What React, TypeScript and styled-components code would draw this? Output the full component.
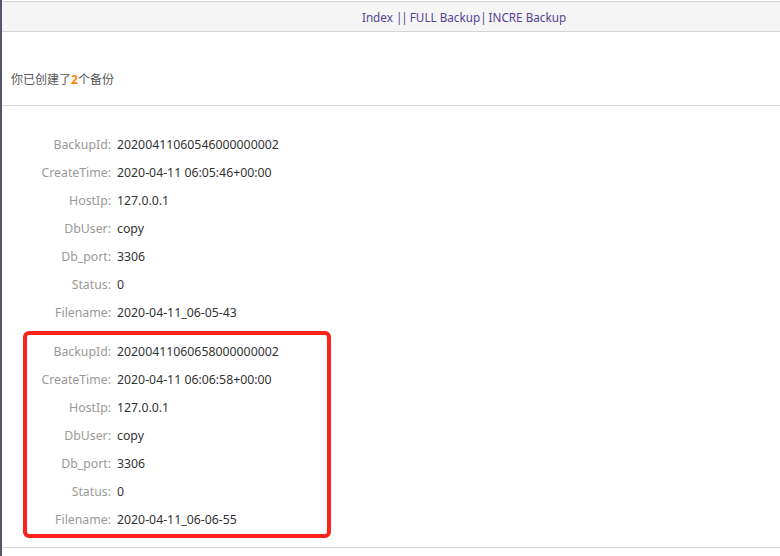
import React from "react";
import styled, { createGlobalStyle } from "styled-components";

const Global = createGlobalStyle`
  html, body { margin: 0; padding: 0; background: #fff; }
  body { font-family: "Noto Sans", "Noto Sans CJK SC", sans-serif; font-size: 12px; }
`;

const Page = styled.div`
  min-height: 556px;
  border-left: 2px solid #55556e;
  box-sizing: border-box;
  padding-top: 1px;
`;

const Header = styled.div`
  height: 29px;
  background: #f5f5f5;
  border-top: 1px solid #d6d6d6;
  border-bottom: 1px solid #d6d6d6;
  display: flex;
  align-items: center;
  justify-content: center;
  padding-left: 146px;
`;

const NavLink = styled.a`
  color: #573f93;
  text-decoration: none;
  font-size: 11.7px;
  white-space: pre;
`;

const Pipe = styled.span`
  letter-spacing: -1px;
`;

const Summary = styled.div`
  padding: 37px 9px 15px;
  line-height: 20px;
  color: #555;
  font-family: "Noto Sans CJK SC", sans-serif;
  font-size: 12px;
  border-bottom: 1px solid #d9d9d9;
`;

const Count = styled.b`
  color: #ff8000;
  font-family: "Noto Sans", sans-serif;
  font-weight: 700;
`;

const Content = styled.div`
  padding: 18px 0 9px 21px;
  border-bottom: 1px solid #d9d9d9;
  display: flex;
  flex-direction: column;
`;

const Card = styled.div<{ $highlight?: boolean }>`
  width: 300px;
  border: 4px solid ${(p) => (p.$highlight ? "#ff2219" : "transparent")};
  border-radius: 6px;
  padding: 2px 0 1px;
  display: grid;
  grid-template-columns: 84px 1fr;
  column-gap: 6px;
  grid-auto-rows: 28px;
  align-items: center;
  font-size: 12.3px;
`;

const Label = styled.span`
  color: #999;
  text-align: right;
  white-space: nowrap;
`;

const Value = styled.span`
  color: #333;
  white-space: nowrap;
`;

const backups = [
  {
    BackupId: "20200411060546000000002",
    CreateTime: "2020-04-11 06:05:46+00:00",
    HostIp: "127.0.0.1",
    DbUser: "copy",
    Db_port: "3306",
    Status: "0",
    Filename: "2020-04-11_06-05-43",
  },
  {
    BackupId: "20200411060658000000002",
    CreateTime: "2020-04-11 06:06:58+00:00",
    HostIp: "127.0.0.1",
    DbUser: "copy",
    Db_port: "3306",
    Status: "0",
    Filename: "2020-04-11_06-06-55",
  },
];

export default function App() {
  return (
    <>
      <Global />
      <Page>
        <Header>
          <NavLink href="#">
            Index <Pipe>||</Pipe> FULL Backup<Pipe>|</Pipe> INCRE Backup
          </NavLink>
        </Header>
        <Summary>
          你已创建了<Count>2</Count>个备份
        </Summary>
        <Content>
          {backups.map((b, i) => (
            <Card key={b.BackupId} $highlight={i === 1}>
              {Object.entries(b).map(([k, v]) => (
                <React.Fragment key={k}>
                  <Label>{k}:</Label>
                  <Value>{v}</Value>
                </React.Fragment>
              ))}
            </Card>
          ))}
        </Content>
      </Page>
    </>
  );
}
